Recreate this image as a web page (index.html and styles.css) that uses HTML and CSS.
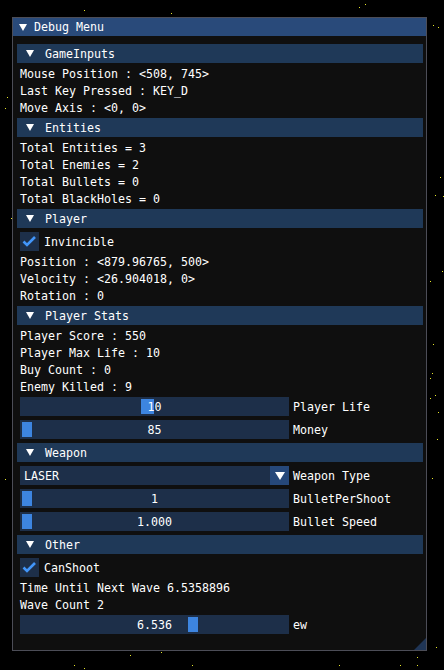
FILE: index.html
```html
<!DOCTYPE html>
<html>
<head>
<meta charset="utf-8">
<link rel="stylesheet" href="styles.css">
</head>
<body>
<div class="stars">
  <span class="star" style="left:84px;top:10px"></span>
  <span class="star" style="left:171px;top:13px"></span>
  <span class="star" style="left:359px;top:7px"></span>
  <span class="star" style="left:365px;top:4px"></span>
  <span class="star" style="left:433px;top:25px"></span>
  <span class="star" style="left:438px;top:27px"></span>
  <span class="star" style="left:7px;top:97px"></span>
  <span class="star" style="left:5px;top:108px"></span>
  <span class="star" style="left:11px;top:218px"></span>
  <span class="star" style="left:5px;top:479px"></span>
  <span class="star" style="left:440px;top:177px"></span>
  <span class="star" style="left:435px;top:195px"></span>
  <span class="star" style="left:443px;top:196px"></span>
  <span class="star" style="left:442px;top:271px"></span>
  <span class="star" style="left:430px;top:281px"></span>
  <span class="star" style="left:433px;top:344px"></span>
  <span class="star" style="left:432px;top:373px"></span>
  <span class="star" style="left:430px;top:378px"></span>
  <span class="star" style="left:435px;top:395px"></span>
  <span class="star" style="left:430px;top:398px"></span>
  <span class="star" style="left:438px;top:412px"></span>
  <span class="star" style="left:437px;top:439px"></span>
  <span class="star" style="left:432px;top:478px"></span>
  <span class="star" style="left:436px;top:647px"></span>
  <span class="star" style="left:130px;top:655px"></span>
  <span class="star" style="left:161px;top:652px"></span>
  <span class="star" style="left:74px;top:665px"></span>
  <span class="star" style="left:84px;top:668px"></span>
  <span class="star" style="left:192px;top:665px"></span>
  <span class="star" style="left:339px;top:665px"></span>
  <span class="star" style="left:400px;top:665px"></span>
  <span class="star" style="left:417px;top:657px"></span>
  <span class="star" style="left:417px;top:665px"></span>
</div>

<div class="window">
  <div class="titlebar"><span class="tri"></span><span class="label">Debug Menu</span></div>
  <div class="content">
    <div class="header"><span class="tri"></span><span class="label">GameInputs</span></div>
    <div class="text">Mouse Position : &lt;508, 745&gt;</div>
    <div class="text">Last Key Pressed : KEY_D</div>
    <div class="text">Move Axis : &lt;0, 0&gt;</div>

    <div class="header"><span class="tri"></span><span class="label">Entities</span></div>
    <div class="text">Total Entities = 3</div>
    <div class="text">Total Enemies = 2</div>
    <div class="text">Total Bullets = 0</div>
    <div class="text">Total BlackHoles = 0</div>

    <div class="header"><span class="tri"></span><span class="label">Player</span></div>
    <div class="check-row">
      <span class="checkbox"><svg width="19" height="19" viewBox="0 0 19 19"><polyline points="3.5,9.5 7,13 15,5" fill="none" stroke="#4296fa" stroke-width="2.6"/></svg></span>
      <span class="label">Invincible</span>
    </div>
    <div class="text">Position : &lt;879.96765, 500&gt;</div>
    <div class="text">Velocity : &lt;26.904018, 0&gt;</div>
    <div class="text">Rotation : 0</div>

    <div class="header"><span class="tri"></span><span class="label">Player Stats</span></div>
    <div class="text">Player Score : 550</div>
    <div class="text">Player Max Life : 10</div>
    <div class="text">Buy Count : 0</div>
    <div class="text">Enemy Killed : 9</div>
    <div class="row">
      <div class="slider"><span class="grab wide" style="left:121px"></span><span class="label">10</span></div>
      <span class="label">Player Life</span>
    </div>
    <div class="row">
      <div class="slider"><span class="grab" style="left:2px"></span><span class="label">85</span></div>
      <span class="label">Money</span>
    </div>

    <div class="header"><span class="tri"></span><span class="label">Weapon</span></div>
    <div class="row">
      <div class="combo"><span class="label combo-text">LASER</span><span class="combo-btn"><span class="tri"></span></span></div>
      <span class="label">Weapon Type</span>
    </div>
    <div class="row">
      <div class="slider"><span class="grab" style="left:2px"></span><span class="label">1</span></div>
      <span class="label">BulletPerShoot</span>
    </div>
    <div class="row">
      <div class="slider"><span class="grab" style="left:2px"></span><span class="label">1.000</span></div>
      <span class="label">Bullet Speed</span>
    </div>

    <div class="header"><span class="tri"></span><span class="label">Other</span></div>
    <div class="check-row">
      <span class="checkbox"><svg width="19" height="19" viewBox="0 0 19 19"><polyline points="3.5,9.5 7,13 15,5" fill="none" stroke="#4296fa" stroke-width="2.6"/></svg></span>
      <span class="label">CanShoot</span>
    </div>
    <div class="text">Time Until Next Wave 6.5358896</div>
    <div class="text">Wave Count 2</div>
    <div class="row">
      <div class="slider"><span class="grab" style="left:168px"></span><span class="label">6.536</span></div>
      <span class="label">ew</span>
    </div>
  </div>
  <div class="grip"></div>
</div>
</body>
</html>
```

FILE: styles.css
```css
* { box-sizing: border-box; }

html, body {
  margin: 0;
  padding: 0;
}

body {
  width: 444px;
  height: 670px;
  overflow: hidden;
  background: #000;
  color: #fff;
  font-family: "DejaVu Sans Mono", "Liberation Mono", monospace;
  font-size: 11.63px;
  line-height: 15px;
  position: relative;
}

.stars {
  position: absolute;
  left: 0;
  top: 0;
  width: 444px;
  height: 670px;
}

.star {
  position: absolute;
  width: 1px;
  height: 1px;
  background: #e6e62a;
}

.window {
  position: relative;
  margin: 17px 0 0 12px;
  width: 415px;
  height: 634px;
  border: 1px solid #4c4d57;
  background: #0f0f0f;
}

.titlebar {
  height: 18px;
  background: #294a7a;
  display: flex;
  align-items: center;
  padding-left: 6px;
  white-space: pre;
}

.titlebar .tri {
  margin-right: 7px;
  margin-top: 1px;
}

.titlebar .label {
  padding-top: 0;
}

.tri {
  display: inline-block;
  width: 0;
  height: 0;
  border-left: 4px solid transparent;
  border-right: 4px solid transparent;
  border-top: 7px solid #fff;
  flex: none;
}

.label {
  padding-top: 2px;
  white-space: pre;
  position: relative;
}

.content {
  padding: 8px 7px 0 7px;
  display: flex;
  flex-direction: column;
  gap: 4px;
}

.text {
  height: 13px;
  white-space: pre;
}

.header {
  height: 19px;
  margin: 0 -4px 0 -3px;
  background: #1f3958;
  display: flex;
  align-items: center;
  padding-left: 9px;
}

.header .tri {
  margin-right: 11px;
}

.check-row {
  display: flex;
  align-items: center;
  gap: 5px;
  height: 19px;
}

.checkbox {
  width: 19px;
  height: 19px;
  background: #1d2f49;
  display: block;
  flex: none;
}

.checkbox svg {
  display: block;
}

.row {
  display: flex;
  align-items: center;
  gap: 4px;
  height: 19px;
}

.slider {
  position: relative;
  width: 269px;
  height: 19px;
  background: #1d2f49;
  flex: none;
  display: flex;
  align-items: center;
  justify-content: center;
}

.grab {
  position: absolute;
  top: 2px;
  width: 10px;
  height: 15px;
  background: #3d85e0;
}

.grab.wide {
  width: 13px;
}

.combo {
  width: 269px;
  height: 19px;
  background: #1d2f49;
  display: flex;
  align-items: center;
  flex: none;
}

.combo-text {
  flex: 1;
  padding-left: 4px;
}

.combo-btn {
  width: 19px;
  height: 19px;
  background: #26487a;
  display: flex;
  align-items: center;
  justify-content: center;
}

.combo-btn .tri {
  border-left-width: 5px;
  border-right-width: 5px;
  border-top-width: 8px;
}

.grip {
  position: absolute;
  right: 0;
  bottom: 0;
  width: 12px;
  height: 12px;
  background: #1f3556;
  clip-path: polygon(100% 0, 100% 100%, 0 100%);
}
```
